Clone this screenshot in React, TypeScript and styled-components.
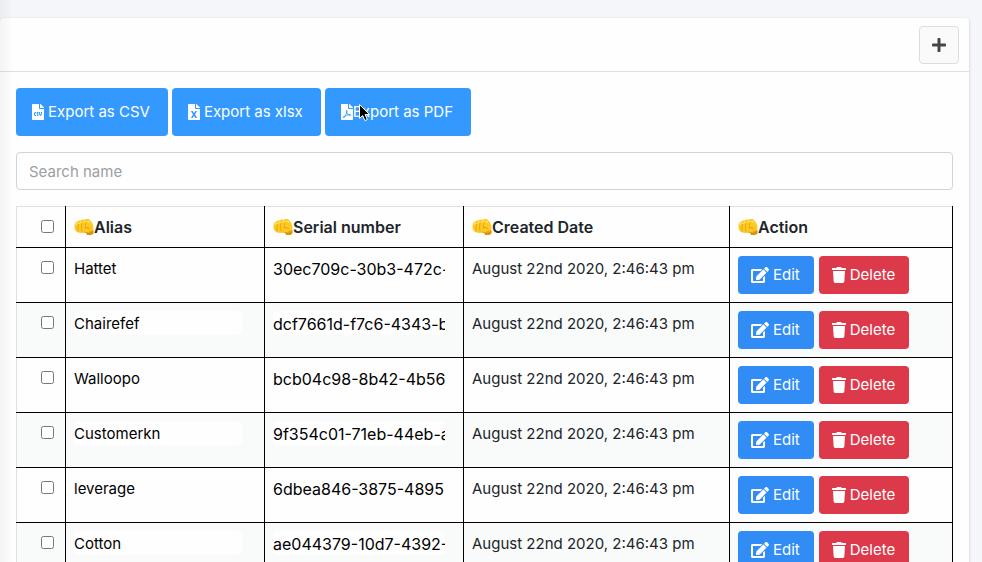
import React from 'react';
import styled, { createGlobalStyle } from 'styled-components';
import { FaEdit, FaFileCsv, FaFileExcel, FaFilePdf, FaPlus, FaTrash } from 'react-icons/fa';

const GlobalStyle = createGlobalStyle`
  *, *::before, *::after { box-sizing: border-box; }
  html, body { margin: 0; overflow: hidden; }
  body {
    background: #f5f6fa;
    color: #212529;
    font-family: Inter, "Liberation Sans", sans-serif;
    font-size: 15px;
    line-height: 24px;
  }
  button, input { font: inherit; }
`;

const Page = styled.main`
  position: relative;
  min-height: 100vh;
  max-height: 100vh;
  overflow: hidden;
  padding: 18px 13px 0 0;

  &::after {
    content: '';
    position: absolute;
    inset: 0 auto 0 0;
    width: 14px;
    background: linear-gradient(90deg, rgba(0, 0, 0, 0.04), rgba(0, 0, 0, 0));
    pointer-events: none;
  }
`;

const Card = styled.section`
  background: #fefefe;
  border-radius: 4px;
  box-shadow: 0 1px 3px rgba(0, 0, 0, 0.2);
`;

const CardHeader = styled.header`
  display: flex;
  justify-content: flex-end;
  padding: 8px 10px 7px;
  border-bottom: 1px solid #dfe0e1;
`;

const AddButton = styled.button`
  display: flex;
  align-items: center;
  justify-content: center;
  width: 40px;
  height: 38px;
  padding: 0;
  border: 1px solid #dcdddd;
  border-radius: 4px;
  background: #fafafa;
  color: #444649;

  svg { width: 14px; height: 16px; }
`;

const CardBody = styled.div`
  display: flex;
  flex-direction: column;
  gap: 16px;
  padding: 16px;
`;

const Toolbar = styled.div`
  display: flex;
  gap: 4px;
`;

const ExportButton = styled.button<{ $gap: number }>`
  position: relative;
  display: flex;
  align-items: center;
  gap: ${({ $gap }) => $gap}px;
  height: 48px;
  padding: 0 18px 0 16px;
  border: 0;
  border-radius: 4px;
  background: #3399ff;
  color: #fff;
  white-space: nowrap;

  > svg { flex: none; width: 12px; height: 16px; }
`;

const Pointer = styled.span`
  position: absolute;
  left: 33px;
  top: 15px;
  display: flex;
  pointer-events: none;
`;

const SearchInput = styled.input`
  width: 100%;
  height: 38px;
  padding: 0 12px;
  border: 1px solid #ced4da;
  border-radius: 4px;
  background: #fefefe;
  color: #212529;

  &::placeholder { color: #9c9fa3; opacity: 1; }
`;

const Table = styled.table`
  width: 100%;
  table-layout: fixed;
  border-collapse: collapse;
`;

const Col = styled.col<{ $width?: number }>`
  width: ${({ $width }) => ($width ? `${$width}px` : 'auto')};
`;

const HeadCell = styled.th`
  height: 41px;
  padding: 8px;
  border-top: 1px solid #dee2e6;
  border-right: 1px solid #000;
  border-bottom: 1px solid #000;
  text-align: left;
  font-size: 16px;
  font-weight: 600;
  white-space: nowrap;

  &:first-child { border-left: 1px solid #dee2e6; }
`;

const Cell = styled.td`
  height: 55px;
  padding: 8px;
  border-right: 1px solid #000;
  border-bottom: 1px solid #000;
  vertical-align: top;
  white-space: nowrap;

  &:first-child { border-left: 1px solid #dee2e6; }
`;

const Created = styled.time`
  display: block;
  line-height: 26px;
`;

const Row = styled.tr`
  &:nth-child(even) { background: #f9fafa; }
`;

const Heading = styled.span`
  display: flex;
  align-items: center;
`;

const FistSvg = styled.svg`
  flex: none;
  width: 20px;
  height: 18px;
`;

const Tick = styled.input`
  display: block;
  width: 13px;
  height: 13px;
  margin: 5px 0 6px 16px;
`;

const CellInput = styled.input<{ $wide?: boolean }>`
  display: block;
  width: ${({ $wide }) => ($wide ? 172 : 168)}px;
  max-width: 100%;
  height: 24px;
  padding: 1px 0 0;
  border: 0;
  border-radius: 4px;
  background: #fefefe;
  color: #000;
  font-size: ${({ $wide }) => ($wide ? 16 : 15)}px;
`;

const Actions = styled.div`
  display: flex;
  gap: 5px;
`;

const ActionButton = styled.button<{ $danger?: boolean }>`
  display: flex;
  align-items: center;
  gap: 4px;
  height: 38px;
  padding: 0 14px 0 13px;
  border: 0;
  border-radius: 4px;
  background: ${({ $danger }) => ($danger ? '#dc3a4b' : '#318df5')};
  color: #fff;

  svg { flex: none; width: ${({ $danger }) => ($danger ? 14 : 18)}px; height: 16px; }
`;

function Fist() {
  return (
    <FistSvg viewBox="0 0 20 18" aria-hidden="true">
      <path d="M11 12h8.500v3.200c-.9 1.600-3.500 2.300-6.500 1.700z" fill="#d8920c" />
      <path d="M.5 8.500C.5 5.500 1.500 4 3 3.800 4 2.500 5.500 2.300 6.500 2.600 7.800 1.300 9.500 1.200 10.500 1.800 12.500.6 15 .8 16.200 2.200c1.500 2 3.300 4.300 3.300 7.300 0 3-1.800 4.500-4.500 5.300-1.300.5-2.500.2-3.500-.3-2.500.6-6 .6-8.500-.5C1.300 13 .5 11 .5 8.500z" fill="#ffc924" />
      <path d="M2.200 6.500c.3-.9.7-1.200 1.500-1.300M5.700 5.300c.4-.9.900-1.200 1.800-1.200M9.700 4.200c.5-.8 1.200-1 2-.8M13.800 3.500c.7-.3 1.400 0 1.800.8" fill="none" stroke="#ffe66c" strokeWidth="1.200" strokeLinecap="round" />
      <path d="M4.300 6.500c-.6 2-.6 4.500 0 6.500M8 5.500c-.6 2-.6 5 0 7.500M11.800 5c-.5 1.500-.5 3 0 4.500" fill="none" stroke="#dda013" strokeWidth=".8" strokeLinecap="round" />
      <path d="M11 10c1.500-.8 3.500-.5 4.500.4M10.500 14.200c2.500.8 5.200.4 6.700-1.500" fill="none" stroke="#d8920c" strokeWidth=".8" strokeLinecap="round" />
    </FistSvg>
  );
}

const rows = [
  { alias: 'Hattet', serial: '30ec709c-30b3-472c-' },
  { alias: 'Chairefef', serial: 'dcf7661d-f7c6-4343-b' },
  { alias: 'Walloopo', serial: 'bcb04c98-8b42-4b56' },
  { alias: 'Customerkn', serial: '9f354c01-71eb-44eb-a' },
  { alias: 'leverage', serial: '6dbea846-3875-4895' },
  { alias: 'Cotton', serial: 'ae044379-10d7-4392-' },
];
const created = 'August 22nd 2020, 2:46:43 pm';
const headings = ['Alias', 'Serial number', 'Created Date', 'Action'];

export default function App() {
  return (
    <>
      <GlobalStyle />
      <Page>
        <Card>
          <CardHeader>
            <AddButton type="button" aria-label="Add"><FaPlus /></AddButton>
          </CardHeader>
          <CardBody>
            <Toolbar>
              <ExportButton type="button" $gap={4}><FaFileCsv />Export as CSV</ExportButton>
              <ExportButton type="button" $gap={4}><FaFileExcel />Export as xlsx</ExportButton>
              <ExportButton type="button" $gap={0}>
                <FaFilePdf />Export as PDF
                <Pointer aria-hidden="true">
                  <svg width="13" height="20" viewBox="0 0 13 20">
                    <path d="M1.500 1.500v14l3.200-3 2.200 5 2.400-1-2.200-4.900h4.500z" fill="#000" stroke="#fff" strokeWidth="1" strokeLinejoin="round" />
                  </svg>
                </Pointer>
              </ExportButton>
            </Toolbar>
            <SearchInput type="text" placeholder="Search name" aria-label="Search name" />
            <Table>
              <colgroup>
                <Col $width={49} />
                <Col $width={199} />
                <Col $width={199} />
                <Col $width={266} />
                <Col />
              </colgroup>
              <thead>
                <tr>
                  <HeadCell><Tick type="checkbox" aria-label="Select all" /></HeadCell>
                  {headings.map((heading) => (
                    <HeadCell key={heading} scope="col"><Heading><Fist />{heading}</Heading></HeadCell>
                  ))}
                </tr>
              </thead>
              <tbody>
                {rows.map(({ alias, serial }) => (
                  <Row key={alias}>
                    <Cell><Tick type="checkbox" aria-label={`Select ${alias}`} /></Cell>
                    <Cell><CellInput type="text" aria-label="Alias" defaultValue={alias} /></Cell>
                    <Cell><CellInput $wide type="text" aria-label="Serial number" defaultValue={serial} /></Cell>
                    <Cell><Created>{created}</Created></Cell>
                    <Cell>
                      <Actions>
                        <ActionButton type="button"><FaEdit />Edit</ActionButton>
                        <ActionButton type="button" $danger><FaTrash />Delete</ActionButton>
                      </Actions>
                    </Cell>
                  </Row>
                ))}
              </tbody>
            </Table>
          </CardBody>
        </Card>
      </Page>
    </>
  );
}
